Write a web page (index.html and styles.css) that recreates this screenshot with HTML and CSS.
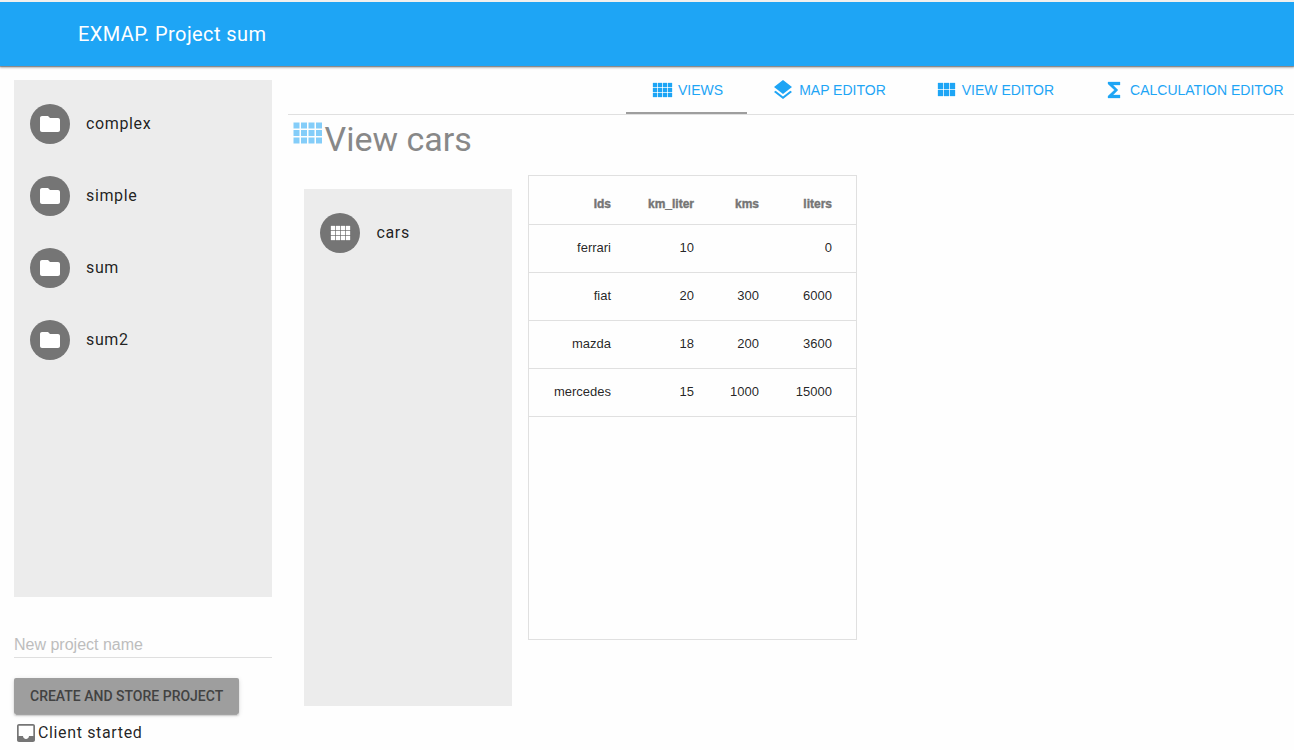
FILE: index.html
```html
<!DOCTYPE html>
<html lang="en">
<head>
<meta charset="utf-8">
<title>EXMAP</title>
<link rel="stylesheet" href="styles.css">
</head>
<body>
<svg class="sprite" aria-hidden="true">
  <symbol id="comfy" viewBox="0 0 24 24"><path d="M3 9h4V5H3v4zm0 5h4v-4H3v4zm5 0h4v-4H8v4zm5 0h4v-4h-4v4zM8 9h4V5H8v4zm5-4v4h4V5h-4zm5 9h4v-4h-4v4zM3 19h4v-4H3v4zm5 0h4v-4H8v4zm5 0h4v-4h-4v4zm5 0h4v-4h-4v4zm0-14v4h4V5h-4z"/></symbol>
  <symbol id="layers" viewBox="0 0 24 24"><path d="M11.99 18.54l-7.37-5.73L3 14.07l9 7 9-7-1.63-1.27-7.38 5.74zM12 16l7.36-5.73L21 9l-9-7-9 7 1.63 1.27L12 16z"/></symbol>
  <symbol id="module" viewBox="0 0 24 24"><path d="M4 11h5V5H4v6zm0 7h5v-6H4v6zm6 0h5v-6h-5v6zm6 0h5v-6h-5v6zm-6-7h5V5h-5v6zm6-6v6h5V5h-5z"/></symbol>
  <symbol id="sigma" viewBox="0 0 24 24"><path d="M18 4H6v2l6.5 6L6 18v2h12v-3h-7l5-5-5-5h7z"/></symbol>
  <symbol id="folder" viewBox="0 0 24 24"><path d="M10 4H4c-1.1 0-1.99.9-1.99 2L2 18c0 1.1.9 2 2 2h16c1.1 0 2-.9 2-2V8c0-1.1-.9-2-2-2h-8l-2-2z"/></symbol>
  <symbol id="inbox" viewBox="0 0 24 24"><path d="M19 3H4.99c-1.11 0-1.98.89-1.98 2L3 19c0 1.1.88 2 1.99 2H19c1.1 0 2-.9 2-2V5c0-1.1-.9-2-2-2zm.3 12H15c0 1.66-1.35 3-3 3s-3-1.34-3-3H4.7V4.7h14.6V15z"/></symbol>
</svg>
<header class="topbar"><h1 class="topbar-title">EXMAP. Project sum</h1></header>
<div class="layout">
  <aside class="sidebar">
    <ul class="list">
      <li class="list-item"><span class="avatar"><svg class="icon"><use href="#folder"/></svg></span><span class="label">complex</span></li>
      <li class="list-item"><span class="avatar"><svg class="icon"><use href="#folder"/></svg></span><span class="label">simple</span></li>
      <li class="list-item"><span class="avatar"><svg class="icon"><use href="#folder"/></svg></span><span class="label">sum</span></li>
      <li class="list-item"><span class="avatar"><svg class="icon"><use href="#folder"/></svg></span><span class="label">sum2</span></li>
    </ul>
    <input class="field" type="text" placeholder="New project name">
    <button class="button" type="button">CREATE AND STORE PROJECT</button>
    <div class="status"><svg class="icon"><use href="#inbox"/></svg><span class="label">Client started</span></div>
  </aside>
  <main class="main">
    <nav class="tabs">
      <a class="tab tab-active"><svg class="icon icon-bold"><use href="#comfy"/></svg>VIEWS</a>
      <a class="tab"><svg class="icon"><use href="#layers"/></svg>MAP EDITOR</a>
      <a class="tab"><svg class="icon icon-bold"><use href="#module"/></svg>VIEW EDITOR</a>
      <a class="tab"><svg class="icon icon-bold"><use href="#sigma"/></svg>CALCULATION EDITOR</a>
    </nav>
    <div class="heading"><svg class="icon heading-icon"><use href="#comfy"/></svg><h2 class="heading-text">View cars</h2></div>
    <div class="content">
      <ul class="list views">
        <li class="list-item"><span class="avatar"><svg class="icon icon-bold"><use href="#comfy"/></svg></span><span class="label">cars</span></li>
      </ul>
      <div class="table-box">
        <table class="table">
          <colgroup><col class="col-id"><col class="col-rate"><col class="col-kms"><col class="col-liters"></colgroup>
          <thead><tr><th>Ids</th><th>km_liter</th><th>kms</th><th>liters</th></tr></thead>
          <tbody>
            <tr><td>ferrari</td><td>10</td><td></td><td>0</td></tr>
            <tr><td>fiat</td><td>20</td><td>300</td><td>6000</td></tr>
            <tr><td>mazda</td><td>18</td><td>200</td><td>3600</td></tr>
            <tr><td>mercedes</td><td>15</td><td>1000</td><td>15000</td></tr>
          </tbody>
        </table>
      </div>
    </div>
  </main>
</div>
</body>
</html>
```
FILE: styles.css
```css
* { box-sizing: border-box; }
html { height: 100%; overflow: hidden; }
body {
  margin: 0;
  height: 100%;
  overflow: hidden;
  background: #fefefe;
  color: rgba(0, 0, 0, .87);
  font-family: Roboto, sans-serif;
}
.sprite { display: none; }
.icon { display: block; flex: none; width: 24px; height: 24px; fill: currentColor; }
.icon-bold { stroke: currentColor; stroke-width: .3px; }

.topbar {
  display: flex;
  align-items: center;
  height: 66px;
  padding: 0 78px;
  border-top: 2px solid #f1f0ee;
  background: #1ea5f5;
  color: #fff;
  box-shadow: 0 2px 2px rgba(0, 0, 0, .24), 0 1px 1px rgba(0, 0, 0, .3);
}
.topbar-title { margin: 0; font-size: 20px; font-weight: 400; line-height: 28px; letter-spacing: .4px; }

.layout { display: flex; gap: 16px; padding-left: 14px; }
.sidebar { flex: none; width: 258px; padding-top: 14px; }

.list { height: 517px; margin: 0; padding: 8px 0; list-style: none; background: #ececec; }
.list-item {
  display: flex;
  align-items: center;
  gap: 16px;
  height: 72px;
  padding: 0 16px;
  font-size: 16px;
  letter-spacing: .64px;
}
.label { padding-bottom: 2px; }
.avatar {
  display: flex;
  align-items: center;
  justify-content: center;
  width: 40px;
  height: 40px;
  border-radius: 50%;
  background: #757575;
  color: #fff;
}

.field {
  display: block;
  width: 100%;
  height: 29px;
  margin: 32px 0 20px;
  padding: 6px 0 2px;
  border: 0;
  border-bottom: 1px solid #dfdfdf;
  background: none;
  font: 16px "Liberation Sans", Arial, sans-serif;
}
.field::placeholder { color: #bdbdbd; }
.button {
  display: block;
  height: 36px;
  padding: 0 16px;
  border: 0;
  border-radius: 2px;
  background: #9e9e9e;
  color: #424242;
  font: 500 14px Roboto, sans-serif;
  white-space: nowrap;
  box-shadow: 0 2px 2px rgba(0, 0, 0, .14), 0 3px 1px -2px rgba(0, 0, 0, .2), 0 1px 5px rgba(0, 0, 0, .12);
}
.status { display: flex; align-items: center; height: 24px; margin-top: 7px; font-size: 16px; letter-spacing: .64px; }
.status .icon { color: #757575; }

.main { flex: 1; min-width: 0; }
.tabs {
  display: flex;
  height: 49px;
  padding-left: 338px;
  border-bottom: 1px solid #e0e0e0;
}
.tab {
  display: flex;
  flex: none;
  align-items: center;
  gap: 4px;
  padding: 2px 24px 0;
  border-bottom: 2px solid transparent;
  color: #1ea5f5;
  font: 14px "Liberation Sans", Arial, sans-serif;
}
.tab-active { border-bottom-color: #9e9e9e; }

.heading { display: flex; height: 48px; padding-left: .5px; }
.heading-icon { width: 36px; height: 36px; margin-top: -.5px; color: #1ea5f5; opacity: .54; }
.heading-text { margin: 4px 0 0; color: #888; font-size: 34px; font-weight: 400; line-height: 40px; }

.content { display: flex; gap: 16px; padding: 12px 0 0 16px; }
.views { width: 208px; margin-top: 14px; }
.views .label { padding-left: .5px; }
.table-box { width: 329px; height: 465px; border: 1px solid #e0e0e0; }
.table {
  width: 327px;
  border-collapse: separate;
  border-spacing: 0;
  table-layout: fixed;
  font: 13px "Liberation Sans", Arial, sans-serif;
  text-align: right;
}
.table th, .table td { height: 48px; padding: 0 18px 2px 0; border-bottom: 1px solid #e0e0e0; }
.table th { height: 49px; padding: 7px 18px 0 0; color: #757575; font-size: 12px; -webkit-text-stroke: .4px #757575; }
.table th:last-child, .table td:last-child { padding-right: 24px; }
.col-id { width: 100px; }
.col-rate { width: 83px; }
.col-kms { width: 65px; }
.col-liters { width: 79px; }
```
